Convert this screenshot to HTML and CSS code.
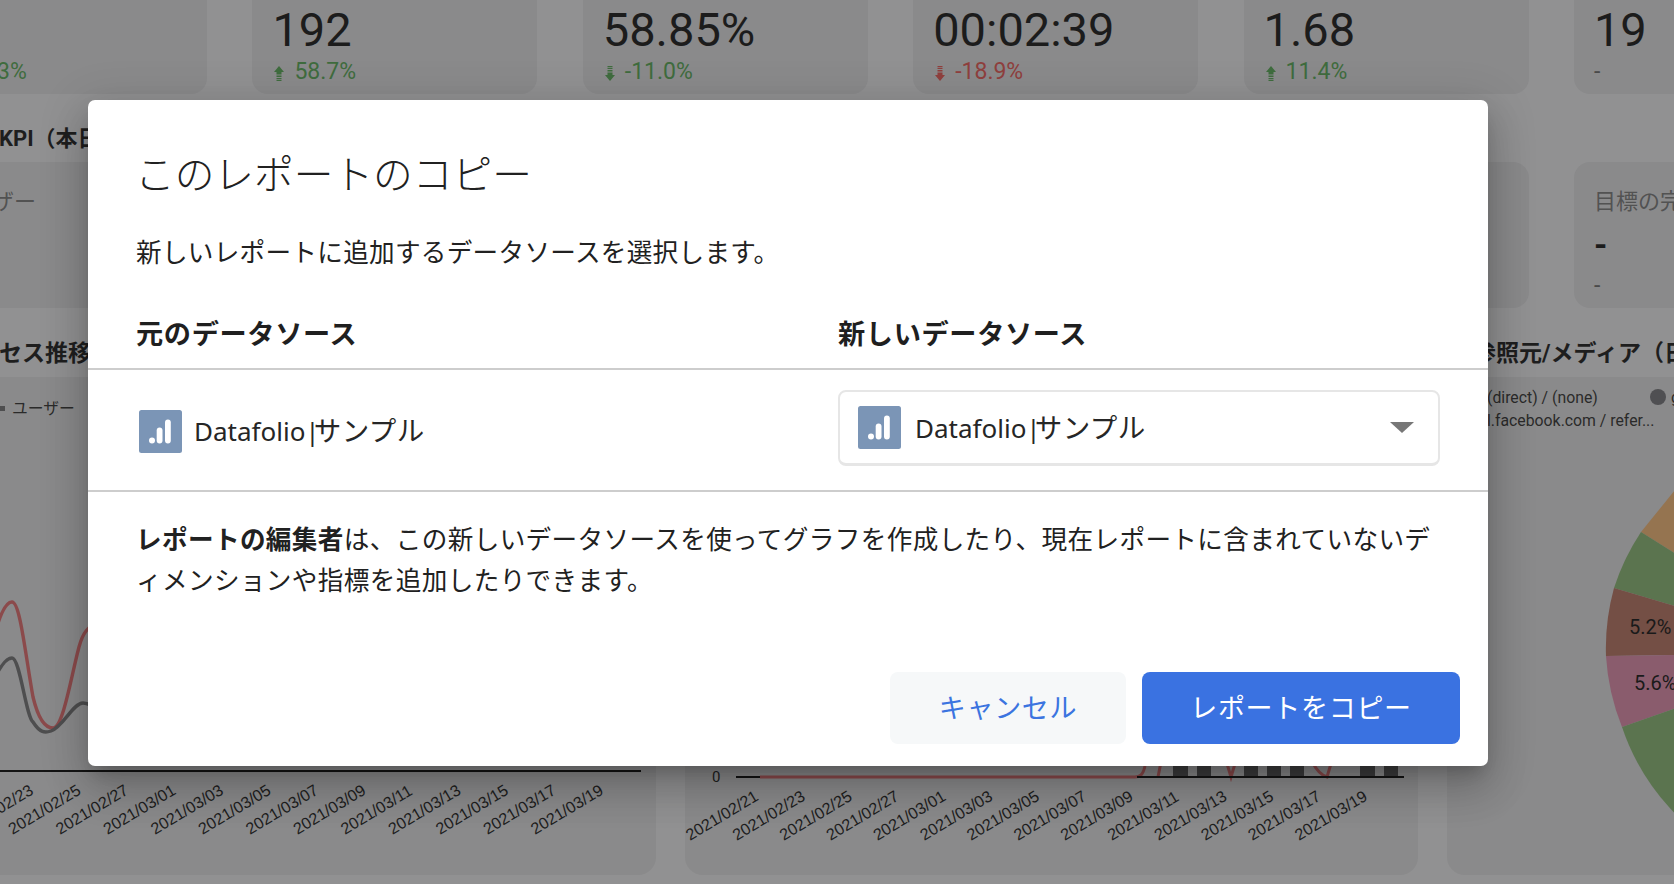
FILE: index.html
```html
<!DOCTYPE html>
<html lang="ja">
<head>
<meta charset="utf-8">
<title>このレポートのコピー</title>
<link rel="stylesheet" href="styles.css">
</head>
<body>
<div class="page">
  <main class="dash">
    <section class="row row-top">
      <div class="card"><div class="num"></div><div class="delta up delta-left">3%</div></div>
      <div class="card"><div class="num">192</div><div class="delta up"><svg class="arrow" viewBox="0 0 10 15"><path d="M5 0 10 6H7.5V15H2.5V6H0zM2.5 8.6h5v1H2.5zM2.5 11h5v1H2.5zM2.5 13.2h5v.8H2.5z" fill-rule="evenodd"/></svg>58.7%</div></div>
      <div class="card"><div class="num">58.85%</div><div class="delta up"><svg class="arrow" viewBox="0 0 10 15"><path d="M5 15 0 9H2.5V0H7.5V9H10zM2.5 5.4h5v1H2.5zM2.5 3h5v1H2.5zM2.5 1h5v.8H2.5z" fill-rule="evenodd"/></svg>-11.0%</div></div>
      <div class="card"><div class="num">00:02:39</div><div class="delta down"><svg class="arrow" viewBox="0 0 10 15"><path d="M5 15 0 9H2.5V0H7.5V9H10zM2.5 5.4h5v1H2.5zM2.5 3h5v1H2.5zM2.5 1h5v.8H2.5z" fill-rule="evenodd"/></svg>-18.9%</div></div>
      <div class="card"><div class="num">1.68</div><div class="delta up"><svg class="arrow" viewBox="0 0 10 15"><path d="M5 0 10 6H7.5V15H2.5V6H0zM2.5 8.6h5v1H2.5zM2.5 11h5v1H2.5zM2.5 13.2h5v.8H2.5z" fill-rule="evenodd"/></svg>11.4%</div></div>
      <div class="card"><div class="num">19</div><div class="delta none">-</div></div>
    </section>
    <h2 class="sec sec-kpi">KPI（本日</h2>
    <section class="row row-mid">
      <div class="card"><div class="label label-left">ザー</div></div>
      <div class="card"></div>
      <div class="card"></div>
      <div class="card"></div>
      <div class="card"></div>
      <div class="card"><div class="label">目標の完了</div><div class="dash-val">-</div><div class="delta none">-</div></div>
    </section>
    <div class="sec-row">
      <h2 class="sec">セス推移</h2>
      <h2 class="sec sec-right">参照元/メディア（日</h2>
    </div>
    <section class="charts">
      <div class="chart">
        <svg class="plot" viewBox="0 0 733 498">
          <path class="ln ln-red" d="M64 290C75 236 83 225 89 225C97 225 102 275 110 320C116 345 124 351 130 351C140 351 148 300 156 270C160 255 165 250 175 245"/>
          <path class="ln ln-dark" d="M64 320C75 290 83 281 89 281C97 281 103 340 110 345C117 356 122 356 128 354C140 350 150 326 160 326C166 326 172 330 180 335"/>
          <line class="axis" x1="0" y1="394" x2="718" y2="394"/>
          <g class="ticks">
            <text transform="translate(42 458) rotate(-31)">2021/02/23</text>
            <text transform="translate(89.5 458) rotate(-31)">2021/02/25</text>
            <text transform="translate(137 458) rotate(-31)">2021/02/27</text>
            <text transform="translate(184.5 458) rotate(-31)">2021/03/01</text>
            <text transform="translate(232 458) rotate(-31)">2021/03/03</text>
            <text transform="translate(279.5 458) rotate(-31)">2021/03/05</text>
            <text transform="translate(327 458) rotate(-31)">2021/03/07</text>
            <text transform="translate(374.5 458) rotate(-31)">2021/03/09</text>
            <text transform="translate(422 458) rotate(-31)">2021/03/11</text>
            <text transform="translate(469.5 458) rotate(-31)">2021/03/13</text>
            <text transform="translate(517 458) rotate(-31)">2021/03/15</text>
            <text transform="translate(564.5 458) rotate(-31)">2021/03/17</text>
            <text transform="translate(612 458) rotate(-31)">2021/03/19</text>
          </g>
          <rect class="legend-sq" x="77" y="29" width="5" height="5"/>
          <text class="legend" x="89" y="37">ユーザー</text>
        </svg>
      </div>
      <div class="chart">
        <svg class="plot" viewBox="0 0 733 498">
          <g class="bars">
            <rect x="488" y="380" width="15" height="20"/><rect x="512" y="380" width="14" height="20"/>
            <rect x="559" y="380" width="14" height="20"/><rect x="582" y="380" width="14" height="20"/>
            <rect x="605" y="380" width="14" height="20"/><rect x="675" y="380" width="15" height="20"/>
            <rect x="699" y="380" width="14" height="20"/>
          </g>
          <path class="ln ln-red ln-thin" d="M75 400H450C455 400 458 398 460 389"/>
          <path class="ln ln-red ln-thin" d="M473 400 477 380M540 380 546 400 552 380M625 380C630 392 636 398 642 400L648 380"/>
          <line class="axis" x1="51" y1="400" x2="75" y2="400"/>
          <line class="axis" x1="452" y1="400" x2="719" y2="400"/>
          <text class="zero" x="27" y="405">0</text>
          <g class="ticks">
            <text transform="translate(5 464) rotate(-31)">2021/02/21</text>
            <text transform="translate(51.85 464) rotate(-31)">2021/02/23</text>
            <text transform="translate(98.7 464) rotate(-31)">2021/02/25</text>
            <text transform="translate(145.55 464) rotate(-31)">2021/02/27</text>
            <text transform="translate(192.4 464) rotate(-31)">2021/03/01</text>
            <text transform="translate(239.25 464) rotate(-31)">2021/03/03</text>
            <text transform="translate(286.1 464) rotate(-31)">2021/03/05</text>
            <text transform="translate(332.95 464) rotate(-31)">2021/03/07</text>
            <text transform="translate(379.8 464) rotate(-31)">2021/03/09</text>
            <text transform="translate(426.65 464) rotate(-31)">2021/03/11</text>
            <text transform="translate(473.5 464) rotate(-31)">2021/03/13</text>
            <text transform="translate(520.35 464) rotate(-31)">2021/03/15</text>
            <text transform="translate(567.2 464) rotate(-31)">2021/03/17</text>
            <text transform="translate(614.05 464) rotate(-31)">2021/03/19</text>
          </g>
        </svg>
      </div>
      <div class="chart">
        <svg class="plot" viewBox="0 0 733 498">
          <text class="legend" x="40" y="26">(direct) / (none)</text>
          <circle class="legend-dot" cx="211" cy="20" r="8"/>
          <text class="legend" x="224" y="26">g</text>
          <text class="legend" x="40" y="49">l.facebook.com / refer...</text>
          <path class="pie-orange" d="M386 276 194 155 228 113 386 49Z"/>
          <path class="pie-green" d="M386 276 194 155A227 227 0 0 0 167 211Z"/>
          <path class="pie-brown" d="M386 276 167 211A227 227 0 0 0 159 279Z"/>
          <path class="pie-pink" d="M386 276 159 279A227 227 0 0 0 175 350Z"/>
          <path class="pie-green" d="M386 276 175 350A227 227 0 0 0 300 486Z"/>
          <text class="pie-label" x="182" y="257">5.2%</text>
          <text class="pie-label" x="187" y="313">5.6%</text>
        </svg>
      </div>
    </section>
  </main>

  <div class="overlay">
    <div class="modal" role="dialog">
      <h1 class="title">このレポートのコピー</h1>
      <p class="lead">新しいレポートに追加するデータソースを選択します。</p>
      <div class="grid grid-head">
        <div class="head">元のデータソース</div>
        <div class="head">新しいデータソース</div>
      </div>
      <div class="grid grid-body">
        <div class="source">
          <svg class="ds-icon" viewBox="0 0 43 43"><rect class="ds-bg" width="43" height="43" rx="2.5"/><circle class="ds-bar" cx="13" cy="30.5" r="3"/><rect class="ds-bar" x="17.7" y="17.5" width="5.8" height="16" rx="2.9"/><rect class="ds-bar" x="26" y="9.5" width="5.8" height="24" rx="2.9"/></svg>
          <span class="ds-name">Datafolio|<span class="ds-kana">サンプル</span></span>
        </div>
        <div class="select">
          <svg class="ds-icon" viewBox="0 0 43 43"><rect class="ds-bg" width="43" height="43" rx="2.5"/><circle class="ds-bar" cx="13" cy="30.5" r="3"/><rect class="ds-bar" x="17.7" y="17.5" width="5.8" height="16" rx="2.9"/><rect class="ds-bar" x="26" y="9.5" width="5.8" height="24" rx="2.9"/></svg>
          <span class="ds-name">Datafolio|<span class="ds-kana">サンプル</span></span>
          <span class="caret"></span>
        </div>
      </div>
      <p class="note"><b>レポートの編集者</b>は、この新しいデータソースを使ってグラフを作成したり、現在レポートに含まれていないデ<br>ィメンションや指標を追加したりできます。</p>
      <div class="actions">
        <button class="btn btn-cancel">キャンセル</button>
        <button class="btn btn-copy">レポートをコピー</button>
      </div>
    </div>
  </div>
</div>
</body>
</html>
```

FILE: styles.css
```css
* { box-sizing: border-box; }
html, body { margin: 0; padding: 0; }
body { width: 1674px; height: 884px; overflow: hidden; }

.page {
  position: relative;
  width: 1674px;
  height: 884px;
  overflow: hidden;
  background: #919192;
  font-family: Roboto, "Noto Sans CJK JP", sans-serif;
  color: #1c1c1c;
}

.dash { display: flex; flex-direction: column; width: 1900px; margin-left: -78px; }

.row { display: flex; gap: 45.4px; }
.row-top { height: 94px; }
.row-mid { height: 146px; }
.card { width: 285px; flex: none; padding-left: 20px; background: #8a8a8b; border-radius: 0 0 16px 16px; }
.row-mid .card { border-radius: 16px; padding-top: 26px; }

.num { height: 60px; padding-top: 3px; font-size: 47px; line-height: 54px; }
.delta { display: flex; align-items: center; gap: 10px; height: 24px; font-size: 23px; line-height: 24px; }
.delta.up { color: #3f6c3e; }
.delta.down { color: #8f3f3d; }
.delta.none { color: #4a4a4a; }
.delta-left { padding-left: 55px; }
.arrow { width: 10px; height: 15px; margin: 3px 0 0 2px; fill: currentColor; }

.label { font-size: 22px; line-height: 28px; color: #525252; }
.label-left { padding-left: 50px; }
.dash-val { height: 58px; padding-top: 6px; font-size: 34px; font-weight: 700; line-height: 44px; }

.sec { margin: 0; font-size: 23px; font-weight: 700; line-height: 28px; color: #1e1e1e; white-space: nowrap; }
.sec-kpi { height: 68px; padding: 31px 0 0 77px; font-size: 22px; }
.sec-row { display: flex; height: 69px; padding: 32px 0 0 77px; }
.sec-right { margin-left: 1382px; }

.charts { display: flex; gap: 29px; margin-left: 1px; }
.chart { position: relative; width: 733px; height: 498px; flex: none; background: #8a8a8b; border-radius: 18px; overflow: hidden; }
.plot { display: block; width: 733px; height: 498px; }

.ln { fill: none; stroke-width: 3.4; }
.ln-red { stroke: #8b4a4b; }
.ln-thin { stroke-width: 3; }
.ln-dark { stroke: #4e4e4f; }
.axis { stroke: #141414; stroke-width: 2; }
.bars rect { fill: #3d3d3e; }
.ticks text { font-family: "Liberation Sans", sans-serif; font-size: 16.2px; fill: #1e1e1e; }
.zero { font-family: Roboto, sans-serif; font-size: 15px; fill: #1e1e1e; }
.legend { font-family: Roboto, "Noto Sans CJK JP", sans-serif; font-size: 15.8px; fill: #2a2a2a; }
.legend-sq { fill: #4e4e4f; }
.legend-dot { fill: #4f4f52; }
.pie-orange { fill: #957450; }
.pie-green { fill: #5b744f; }
.pie-brown { fill: #744f45; }
.pie-pink { fill: #8a5c6d; }
.pie-label { font-family: Roboto, sans-serif; font-size: 20px; fill: #1a1a1a; }

.overlay { position: absolute; left: 88px; top: 100px; }
.modal {
  width: 1400px;
  height: 666px;
  padding-top: 49px;
  background: #fff;
  border-radius: 7px;
  color: #212121;
  font-family: "Noto Sans", "Noto Sans CJK JP", sans-serif;
  box-shadow: 0 11px 15px -7px rgba(0,0,0,.2), 0 24px 38px 3px rgba(0,0,0,.14), 0 9px 46px 8px rgba(0,0,0,.12);
}
.title { margin: 0 0 0 47px; font-size: 39.7px; font-weight: 300; line-height: 50px; letter-spacing: 0; }
.lead { margin: 34px 0 0 48px; font-size: 25.6px; line-height: 40px; letter-spacing: .3px; }

.grid { display: grid; grid-template-columns: 701px 1fr; padding: 0 48px 0 50px; }
.grid-head { margin-top: 41px; height: 56px; border-bottom: 2px solid #cdcdcd; }
.head { margin-left: -2px; font-size: 27.2px; font-weight: 700; line-height: 40px; letter-spacing: .65px; color: #1f1f1f; }
.head:last-child { margin-left: -1px; }
.grid-body { height: 122px; border-bottom: 2px solid #cdcdcd; align-items: start; }

.source { display: flex; align-items: center; gap: 12px; margin-top: 40px; padding-left: 1px; }
.select { display: flex; align-items: center; gap: 14px; height: 76px; margin: 20px 0 0 -1px; padding: 0 24px 0 18px; border: 2px solid #e6e6e6; border-bottom-width: 3px; border-radius: 8px; }
.ds-icon { width: 43px; height: 43px; flex: none; }
.ds-bg { fill: #7b95b6; }
.ds-bar { fill: #fff; }
.ds-name { margin-bottom: 2px; font-size: 26px; line-height: 40px; white-space: nowrap; color: #262626; }
.select .ds-name { margin-bottom: 0; }
.ds-kana { margin-left: -6px; font-size: 27.5px; letter-spacing: .5px; }
.caret { width: 0; height: 0; margin-left: auto; border-left: 12px solid transparent; border-right: 12px solid transparent; border-top: 11px solid #777; }

.note { margin: 27px 0 0 48px; font-size: 25.6px; line-height: 41px; letter-spacing: .38px; white-space: nowrap; }
.note b { font-weight: 700; }

.actions { display: flex; justify-content: flex-end; gap: 16px; margin-top: 71px; padding-right: 28px; }
.btn { height: 72px; padding: 0 0 4px; border: 0; border-radius: 8px; font-family: "Noto Sans", "Noto Sans CJK JP", sans-serif; font-size: 27px; letter-spacing: .7px; }
.btn-cancel { width: 236px; background: #f6f8f9; color: #3b74e0; }
.btn-copy { width: 318px; background: #3a72e1; color: #fff; }
```
